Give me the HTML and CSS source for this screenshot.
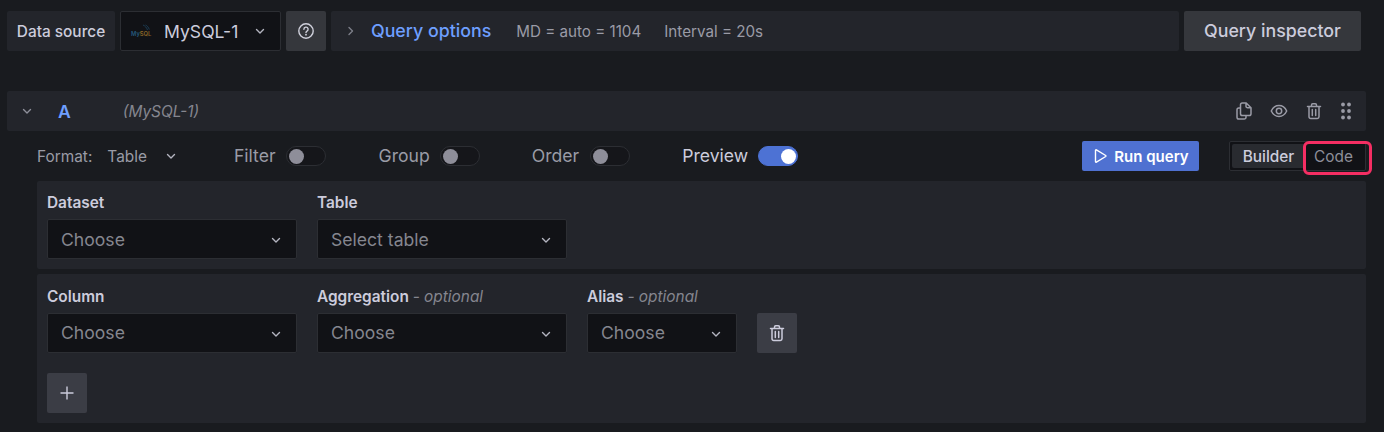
FILE: index.html
```html
<!DOCTYPE html>
<html lang="en">
<head>
<meta charset="utf-8">
<title>Query editor</title>
<link rel="stylesheet" href="styles.css">
</head>
<body>
<svg class="defs" width="0" height="0" aria-hidden="true">
  <symbol id="chev" viewBox="0 0 16 16"><path d="M4.500 6.400 8 9.900l3.500-3.500" fill="none" stroke="currentColor" stroke-width="1.400" stroke-linecap="round" stroke-linejoin="round"/></symbol>
  <symbol id="trash" viewBox="0 0 18 18"><path d="M2.500 4.500h13M6.500 4.500V3a1.200 1.200 0 0 1 1.200-1.200h2.600A1.200 1.200 0 0 1 11.500 3v1.500M4 4.500v10.300A1.700 1.700 0 0 0 5.700 16.500h6.600a1.700 1.700 0 0 0 1.700-1.700V4.500M7.300 7.500v6M10.700 7.500v6" fill="none" stroke="currentColor" stroke-width="1.500" stroke-linecap="round" stroke-linejoin="round"/></symbol>
</svg>
<header class="toolbar">
  <div class="ds-label">Data source</div>
  <div class="ds-select">
    <svg class="mysql-logo" width="22" height="14" viewBox="0 0 22 14"><path d="M13 1c2 .8 3.500 2.500 4.500 5M15.500 1c1.800 .8 3 2.300 3.800 4.500" fill="none" stroke="#1d4460" stroke-width=".8"/><text class="logo-text" x="1" y="12"><tspan fill="#25587c">My</tspan><tspan fill="#8a6526">SQL</tspan></text></svg>
    <span class="ds-name">MySQL-1</span>
    <svg class="chev ds-chev"><use href="#chev"/></svg>
  </div>
  <button class="help" aria-label="Help">
    <svg width="18" height="18" viewBox="0 0 18 18"><circle cx="9" cy="9" r="7.200" fill="none" stroke="currentColor" stroke-width="1.400"/><path d="M6.900 7.200a2.100 2.100 0 1 1 3.100 1.900c-.7.400-1 .8-1 1.400" fill="none" stroke="currentColor" stroke-width="1.400" stroke-linecap="round"/><circle cx="9" cy="12.700" r=".9" fill="currentColor"/></svg>
  </button>
  <div class="options">
    <svg class="opt-chev" width="16" height="16" viewBox="0 0 16 16"><path d="M6 4.500 9.500 8 6 11.500" fill="none" stroke="currentColor" stroke-width="1.400" stroke-linecap="round" stroke-linejoin="round"/></svg>
    <span class="opt-title">Query options</span>
    <span class="opt-info">MD = auto = 1104</span>
    <span class="opt-info opt-interval">Interval = 20s</span>
  </div>
  <button class="inspector">Query inspector</button>
</header>

<section class="query">
  <div class="query-head">
    <svg class="chev head-chev"><use href="#chev"/></svg>
    <span class="ref">A</span>
    <span class="ref-ds">(MySQL-1)</span>
    <div class="head-icons">
      <svg width="18" height="18" viewBox="0 0 18 18"><path d="M5.500 6H3.800A1.800 1.800 0 0 0 2 7.800v7.400A1.800 1.800 0 0 0 3.800 17h5.400A1.800 1.800 0 0 0 11 15.200V13.500M5.500 2.800A1.800 1.800 0 0 1 7.300 1h3.900L16 5.800v5.900a1.800 1.800 0 0 1-1.800 1.800H7.300a1.800 1.800 0 0 1-1.800-1.800zM11 1.200v3a1.600 1.600 0 0 0 1.600 1.600h3.200" fill="none" stroke="currentColor" stroke-width="1.500" stroke-linejoin="round"/></svg>
      <svg width="18" height="18" viewBox="0 0 18 18"><path d="M1.300 9C3 5.400 5.700 3.600 9 3.600s6 1.800 7.700 5.400C15 12.600 12.300 14.400 9 14.400S3 12.600 1.300 9z" fill="none" stroke="currentColor" stroke-width="1.500" stroke-linejoin="round"/><circle cx="9" cy="9" r="2.700" fill="none" stroke="currentColor" stroke-width="1.500"/></svg>
      <svg width="18" height="18"><use href="#trash"/></svg>
      <svg class="dots" width="12" height="18" viewBox="0 0 12 18" fill="currentColor"><circle cx="3" cy="2.500" r="1.900"/><circle cx="9" cy="2.500" r="1.900"/><circle cx="3" cy="9" r="1.900"/><circle cx="9" cy="9" r="1.900"/><circle cx="3" cy="15.500" r="1.900"/><circle cx="9" cy="15.500" r="1.900"/></svg>
    </div>
  </div>

  <div class="controls">
    <span class="fmt-label">Format:</span>
    <span class="fmt-value">Table</span>
    <svg class="chev fmt-chev"><use href="#chev"/></svg>
    <span class="sw-label sw-filter">Filter</span><span class="switch"></span>
    <span class="sw-label sw-group">Group</span><span class="switch"></span>
    <span class="sw-label sw-order">Order</span><span class="switch switch-order"></span>
    <span class="sw-label sw-preview">Preview</span><span class="switch on"></span>
    <button class="run">
      <svg width="16" height="16" viewBox="0 0 16 16"><path d="M3.500 2.400v11.200a.6.600 0 0 0 .9.500l9.300-5.600a.6.600 0 0 0 0-1L4.400 1.900a.6.600 0 0 0-.9.500z" fill="none" stroke="currentColor" stroke-width="1.400" stroke-linejoin="round"/></svg>
      Run query
    </button>
    <div class="radio">
      <span class="radio-on">Builder</span>
      <span class="radio-off">Code</span>
      <span class="highlight"></span>
    </div>
  </div>

  <div class="panel panel-one">
    <div class="fields">
      <div class="field">
        <label class="label">Dataset</label>
        <div class="select w250"><span>Choose</span><svg class="chev"><use href="#chev"/></svg></div>
      </div>
      <div class="field">
        <label class="label">Table</label>
        <div class="select w250"><span>Select table</span><svg class="chev"><use href="#chev"/></svg></div>
      </div>
    </div>
  </div>

  <div class="panel panel-two">
    <div class="fields">
      <div class="field">
        <label class="label">Column</label>
        <div class="select w250"><span>Choose</span><svg class="chev"><use href="#chev"/></svg></div>
      </div>
      <div class="field">
        <label class="label">Aggregation <em>- optional</em></label>
        <div class="select w250"><span>Choose</span><svg class="chev"><use href="#chev"/></svg></div>
      </div>
      <div class="field">
        <label class="label">Alias <em>- optional</em></label>
        <div class="select w150"><span>Choose</span><svg class="chev"><use href="#chev"/></svg></div>
      </div>
      <button class="square row-del" aria-label="Remove"><svg width="18" height="18"><use href="#trash"/></svg></button>
    </div>
    <button class="square add" aria-label="Add"><svg width="16" height="16" viewBox="0 0 16 16"><path d="M8 1.500v13M1.500 8h13" fill="none" stroke="currentColor" stroke-width="1.400"/></svg></button>
  </div>
</section>
</body>
</html>
```

FILE: styles.css
```css
* { box-sizing: border-box; }
html, body { margin: 0; height: 100%; }
body {
  background: #191b1f;
  color: #ccccdc;
  font-family: Inter, "Noto Sans", sans-serif;
  font-size: 17.6px;
  overflow: hidden;
  padding: 11px 18px 0 7px;
}
button { font-family: inherit; border: 0; padding: 0; color: inherit; }
.defs { position: absolute; }
.chev { width: 16px; height: 16px; color: #b4b5c0; flex: none; }
.logo-text { font-family: Inter, sans-serif; font-size: 5.800px; font-weight: 600; }

.toolbar { display: flex; height: 40px; margin-right: 5px; gap: 5px; }
.ds-label {
  width: 108px; background: #23252b; border-radius: 2px;
  display: flex; align-items: center; justify-content: center;
  font-size: 15.4px; font-weight: 500; color: #ccccdc;
}
.ds-select {
  width: 161px; background: #111216; border: 1px solid #2c2e33; border-radius: 2px;
  display: flex; align-items: center; padding-left: 9px;
}
.ds-name { margin-left: 12px; color: #ccccdc; }
.ds-chev { margin-left: 14px; }
.help {
  width: 40px; background: #35373c; border-radius: 2px;
  display: flex; align-items: center; justify-content: center; color: #d0d1dc;
}
.options {
  flex: 1; background: #23252b; border-radius: 2px;
  display: flex; align-items: center; padding-left: 12px;
}
.opt-chev { color: #7d7f89; }
.opt-title { margin-left: 12px; padding-bottom: 2px; font-size: 17.8px; font-weight: 500; color: #6e9fff; }
.opt-info { margin-left: 25px; font-size: 15.2px; color: #9a9ba6; }
.opt-interval { margin-left: 23px; }
.inspector {
  width: 177px; background: #35373c; border-radius: 2px; padding-bottom: 2px;
  font-size: 17.8px; font-weight: 500; color: #ccccdc;
}

.query { margin-top: 40px; }
.query-head {
  height: 40px; background: #23252b; border-radius: 2px;
  display: flex; align-items: center; padding-left: 12px;
}
.head-chev { color: #8e8f9a; }
.ref { margin-left: 23px; font-weight: 600; color: #6e9fff; }
.ref-ds { margin-left: 52px; font-size: 15.4px; font-style: italic; color: #85868f; }
.head-icons { margin-left: auto; margin-right: 14px; display: flex; align-items: center; gap: 17px; color: #9a9ba6; }

.controls {
  height: 30px; margin: 10px 0 10px 30px;
  display: flex; align-items: center; font-size: 15.4px; color: #9a9ba6;
}
.fmt-value { margin-left: 15px; }
.fmt-chev { margin-left: 16px; }
.sw-label { padding-bottom: 2px; font-size: 17.6px; color: #9a9ba6; }
.sw-filter { margin-left: 55px; }
.sw-group { margin-left: 53px; }
.sw-order { margin-left: 52px; }
.sw-preview { margin-left: 52px; color: #ccccdc; }
.switch {
  position: relative; width: 40px; height: 20px; margin-left: 10px;
  background: #15161a; border: 1px solid #2c2e33; border-radius: 10px; flex: none;
}
.switch-order { margin-left: 11px; }
.switch::after {
  content: ""; position: absolute; left: 2px; top: 1.500px;
  width: 15px; height: 15px; border-radius: 50%; background: #8e8e99;
}
.switch.on { background: #4d72d4; border-color: #4d72d4; }
.switch.on::after { left: 22px; background: #fff; }
.run {
  margin-left: auto; width: 117px; height: 30px; background: #4f71d1; border-radius: 2px;
  display: flex; align-items: center; justify-content: center; gap: 6px;
  font-size: 15px; font-weight: 600; color: #fff;
}
.radio {
  position: relative; margin-left: 30px; width: 137px; height: 30px;
  background: #111216; border: 1px solid #2c2e33; border-radius: 2px;
  display: flex; align-items: center; padding-left: 2px; font-size: 15.4px;
}
.radio-on {
  width: 73px; height: 24px; background: #292b30; border-radius: 2px;
  display: flex; align-items: center; justify-content: center; font-weight: 500; color: #ccccdc;
}
.radio-off { margin-left: 9px; color: #8e8f9a; }
.highlight {
  position: absolute; left: 73px; top: -1px; width: 69px; height: 34px;
  border: 3px solid #f52e63; border-radius: 6px;
}

.panel { background: #23252b; border-radius: 2px; margin: 0 0 5px 30px; padding: 10px; }
.panel-one { height: 88px; }
.panel-two { height: 149px; }
.fields { display: flex; gap: 20px; }
.label { display: block; height: 22px; margin-bottom: 6px; font-size: 15.4px; font-weight: 600; line-height: 24px; color: #ccccdc; }
.panel-two .label { height: 24px; margin-bottom: 5px; line-height: 26px; }
.label em { font-weight: 400; color: #85868f; }
.select {
  height: 40px; background: #111216; border: 1px solid #2c2e33; border-radius: 2px;
  display: flex; align-items: center; justify-content: space-between;
  padding: 0 12px 0 13px; color: #85868f;
}
.panel-two .select span { padding-bottom: 2px; }
.select .chev { margin-top: 2px; }
.w250 { width: 250px; }
.w150 { width: 150px; }
.square {
  width: 40px; height: 40px; background: #3b3d45; border-radius: 2px;
  display: flex; align-items: center; justify-content: center; color: #ccccdc;
}
.row-del { margin-top: 29px; }
.add { margin-top: 20px; }
```
